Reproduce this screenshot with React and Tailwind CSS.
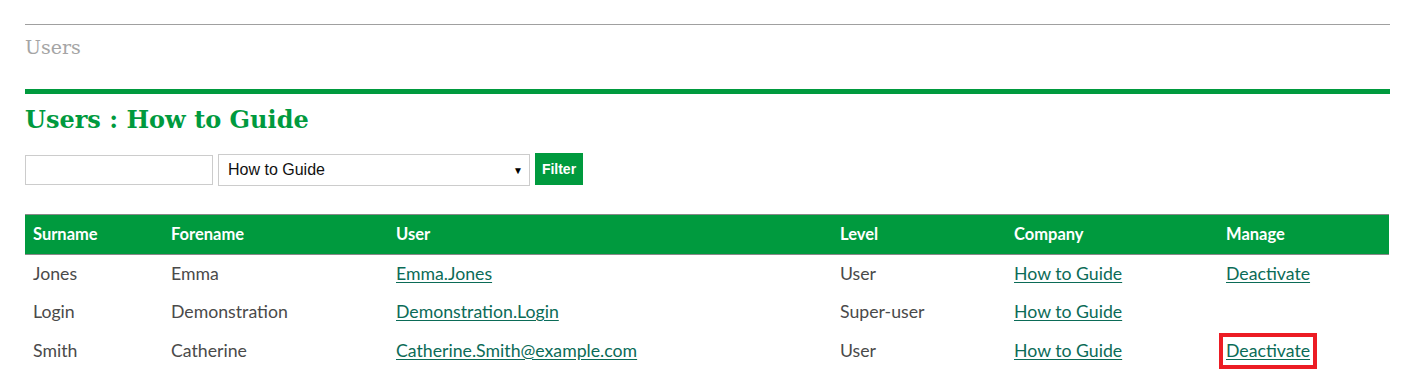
import React from 'react';

const rows = [
  { surname: 'Jones', forename: 'Emma', user: 'Emma.Jones', level: 'User', company: 'How to Guide', manage: true },
  { surname: 'Login', forename: 'Demonstration', user: 'Demonstration.Login', level: 'Super-user', company: 'How to Guide', manage: false },
  { surname: 'Smith', forename: 'Catherine', user: 'Catherine.Smith@example.com', level: 'User', company: 'How to Guide', manage: true, highlight: true },
];

const link = 'text-[#0b6b57] underline underline-offset-2';

export default function App() {
  return (
    <div className="bg-white px-[25px] pt-[24px] pb-[20px] font-['Lato',sans-serif] text-[#4a4a4a]" style={{ width: 1404 }}>
      <div className="border-t border-[#a0a0a0] w-[1365px]" />
      <div className="pt-[8px] h-[64px] font-['DejaVu_Serif',serif] text-[19px] text-[#a5a5a5]">Users</div>

      <div className="h-[5px] bg-[#009a3e] w-[1365px]" />
      <h1 className="mt-[11px] font-['DejaVu_Serif',serif] font-bold text-[24px] leading-[30px] text-[#009a3e]">
        Users : How to Guide
      </h1>

      {/* Filter bar */}
      <div className="flex items-center mt-[19px] gap-[5px]">
        <input className="w-[188px] h-[30px] border border-[#cccccc] outline-none" />
        <div className="relative w-[312px] h-[32px] border border-[#cccccc] flex items-center px-[9px] font-['Liberation_Sans',sans-serif] text-[16px] text-[#111]">
          How to Guide
          <span className="absolute right-[6px] top-[8px] text-[10px] text-black">▼</span>
        </div>
        <button className="w-[48px] h-[32px] -mt-[2px] bg-[#009a3e] text-white font-['Liberation_Sans',sans-serif] font-bold text-[14px]">
          Filter
        </button>
      </div>

      {/* Users table */}
      <table className="mt-[28px] w-[1364px] table-fixed border-collapse text-[17.7px]">
        <colgroup>
          <col className="w-[138px]" />
          <col className="w-[225px]" />
          <col className="w-[444px]" />
          <col className="w-[174px]" />
          <col className="w-[212px]" />
          <col className="w-[171px]" />
        </colgroup>
        <thead>
          <tr className="bg-[#009a3e] text-white text-[16.5px] font-bold h-[40px] border-y border-[#888]">
            <th className="text-left pl-[8px]">Surname</th>
            <th className="text-left pl-[8px]">Forename</th>
            <th className="text-left pl-[8px]">User</th>
            <th className="text-left pl-[8px]">Level</th>
            <th className="text-left pl-[8px]">Company</th>
            <th className="text-left pl-[8px]">Manage</th>
          </tr>
        </thead>
        <tbody>
          {rows.map(r => (
            <tr key={r.user} className="h-[38px]">
              <td className="pl-[8px] pt-[2px]">{r.surname}</td>
              <td className="pl-[8px] pt-[2px]">{r.forename}</td>
              <td className="pl-[8px] pt-[2px]"><a href="#" className={link}>{r.user}</a></td>
              <td className="pl-[8px] pt-[2px]">{r.level}</td>
              <td className="pl-[8px] pt-[2px]"><a href="#" className={link}>{r.company}</a></td>
              <td className="pl-[8px] pt-[2px]">
                {r.manage && (
                  r.highlight ? (
                    <span className="inline-block -ml-[7px] px-[3px] py-[1px] border-[4px] border-[#ec1c24]">
                      <a href="#" className={link}>Deactivate</a>
                    </span>
                  ) : (
                    <a href="#" className={link}>Deactivate</a>
                  )
                )}
              </td>
            </tr>
          ))}
        </tbody>
      </table>
    </div>
  );
}
